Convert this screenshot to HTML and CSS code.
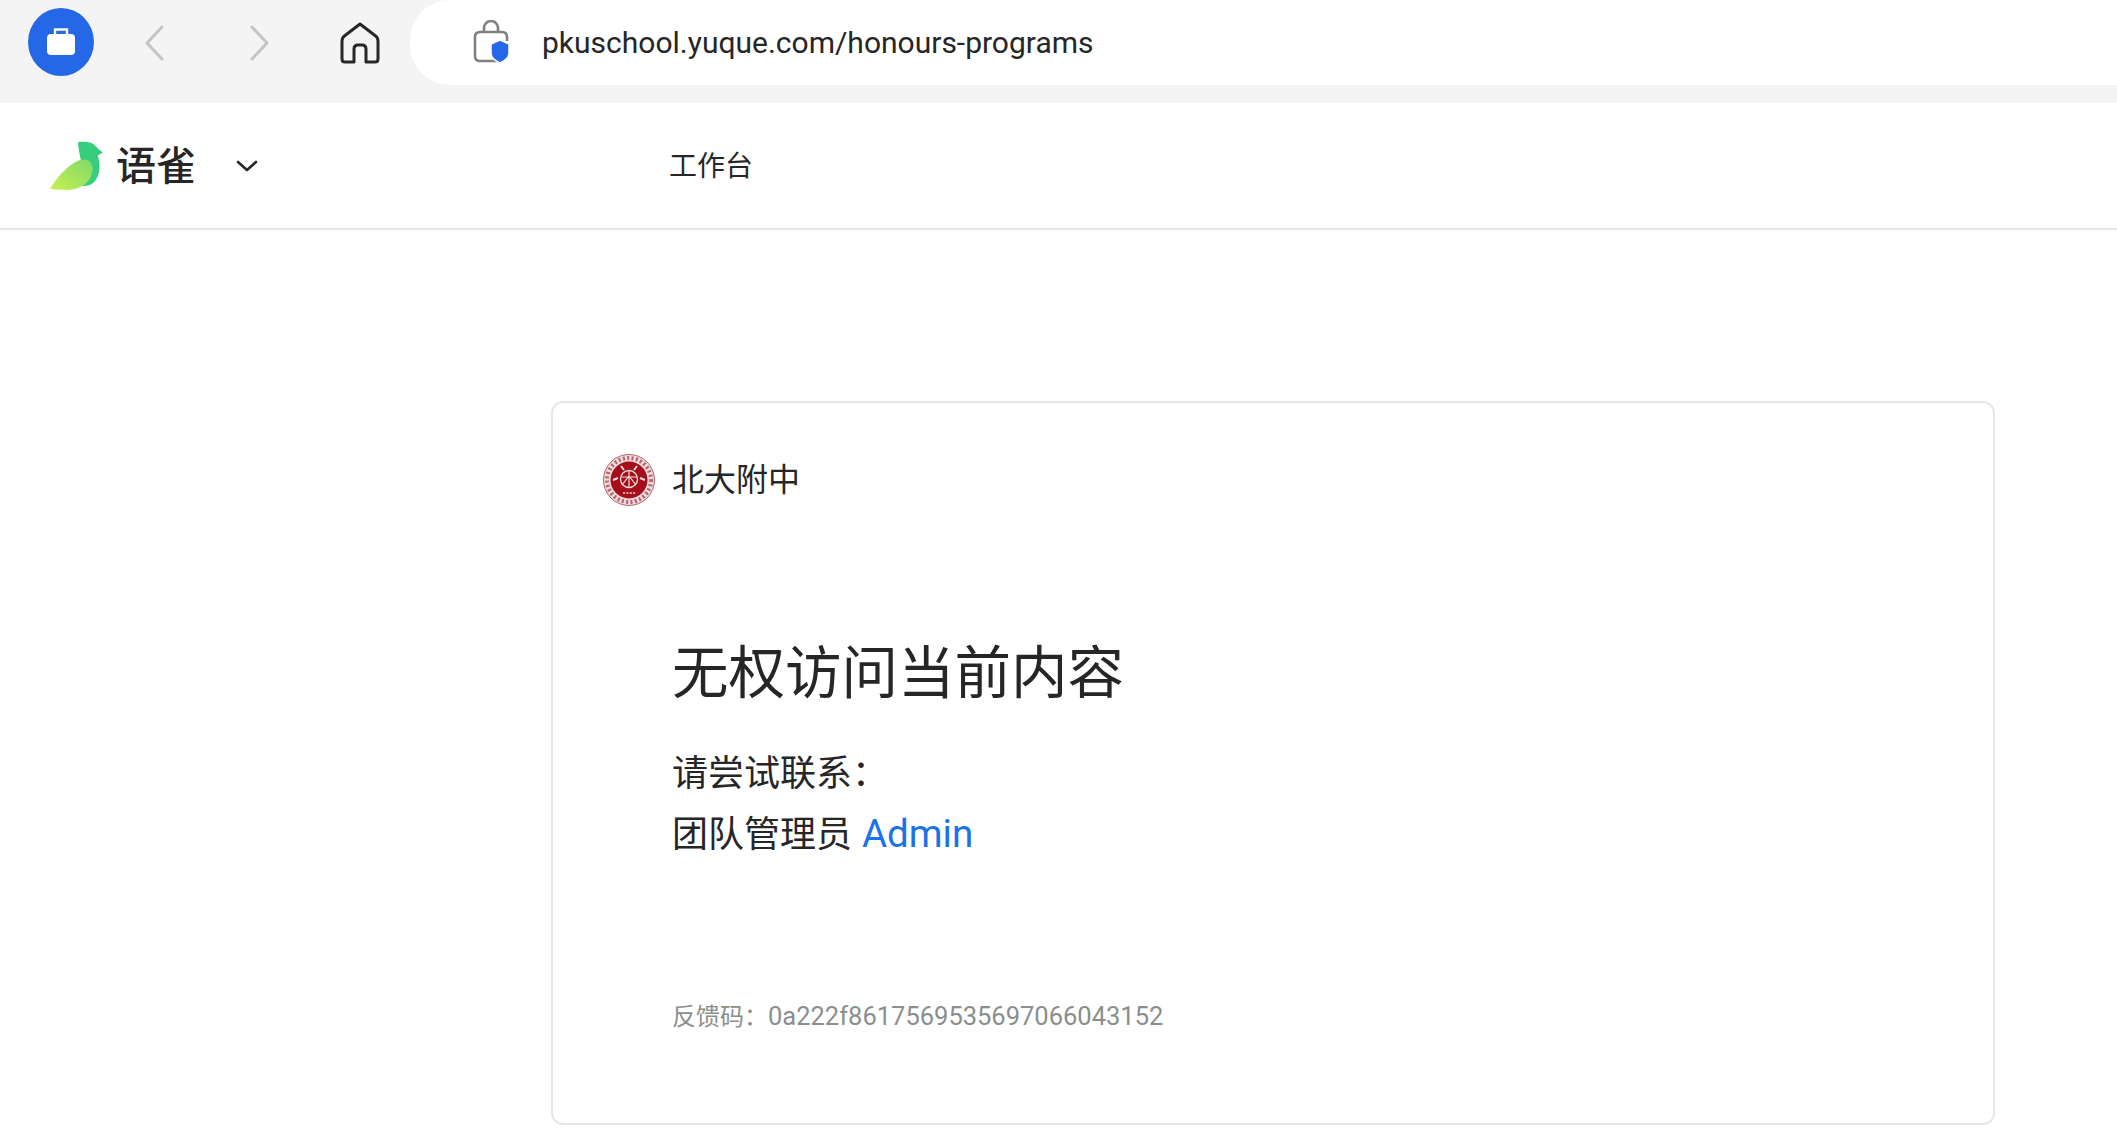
FILE: index.html

```html
<!DOCTYPE html>
<html lang="zh-CN">
<head>
  <meta charset="UTF-8" />
  <title>语雀</title>
  <link rel="stylesheet" href="styles.css">
</head>
<body>
  <div class="browser-bar">
    <div class="work-badge">
      <svg width="30" height="30" viewBox="0 0 30 30">
        <path d="M9 8V2.500h12V8" fill="none" stroke="#fff" stroke-width="2.400"/>
        <rect x="1" y="7" width="28" height="21" rx="4" fill="#fff"/>
      </svg>
    </div>
    <svg class="nav-arrow" width="20" height="36" viewBox="0 0 20 36">
      <path d="M17 2 2 18l15 16" fill="none" stroke="#c4c4c4" stroke-width="3" stroke-linecap="round" stroke-linejoin="round"/>
    </svg>
    <svg class="nav-arrow forward" width="20" height="36" viewBox="0 0 20 36">
      <path d="M3 2l15 16L3 34" fill="none" stroke="#c4c4c4" stroke-width="3" stroke-linecap="round" stroke-linejoin="round"/>
    </svg>
    <svg class="home-icon" width="40" height="42" viewBox="0 0 40 42">
      <path d="M20 2 5 13.500Q2 15.500 2 19v18q0 3 3 3h9V27q0-4 4-4h4q4 0 4 4v13h9q3 0 3-3V19q0-3.500-3-5.500z" fill="none" stroke="#262626" stroke-width="3" stroke-linejoin="round"/>
    </svg>
    <div class="address-bar">
      <svg class="lock-icon" width="38" height="44" viewBox="0 0 38 44">
        <path d="M11 12V8a7 7 0 0 1 14 0v4" fill="none" stroke="#808080" stroke-width="2.600"/>
        <path d="M25 41H7q-5 0-5-5V17q0-5 5-5h22q5 0 5 5v4" fill="none" stroke="#808080" stroke-width="2.600"/>
        <path d="M27 20l9 4v9q0 6-9 10-9-4-9-10v-9z" fill="#2468e8" stroke="#fff" stroke-width="1.500"/>
      </svg>
      <span class="url">pkuschool.yuque.com/honours-programs</span>
    </div>
  </div>

  <header class="topnav">
    <div class="brand">
      <svg width="54" height="50" viewBox="0 0 52 48">
        <defs>
          <linearGradient id="wing" x1="0" y1="1" x2="1" y2="0">
            <stop offset="0" stop-color="#c8f050"/>
            <stop offset="1" stop-color="#7fd96a"/>
          </linearGradient>
        </defs>
        <path d="M27 1c8-1 14 0 17 4 2 2 5 5 7 6l-5 3c3 10 2 19-3 25-3 3-7 5-12 4L30 20c-1-6-3-13-3-19z" fill="#36ce7c"/>
        <path d="M0 46C6 36 16 24 27 19c7-3 14-1 14 8 0 10-9 20-24 20-6 0-12 0-17-1z" fill="url(#wing)"/>
      </svg>
      <span class="brand-name">语雀</span>
      <svg class="chevron" width="22" height="14" viewBox="0 0 22 14">
        <path d="M2 3l9 8 9-8" fill="none" stroke="#262626" stroke-width="2.600" stroke-linecap="round" stroke-linejoin="round"/>
      </svg>
    </div>
    <a class="nav-link">工作台</a>
  </header>

  <main class="content">
    <section class="card">
      <div class="org">
        <svg class="org-logo" width="52" height="52" viewBox="0 0 52 52">
          <circle cx="26" cy="26" r="25.500" fill="#ecdcdd" stroke="#b5626b" stroke-width="1"/>
          <circle cx="26" cy="26" r="22" fill="none" stroke="#b9606a" stroke-width="4" stroke-dasharray="2 2.400"/>
          <circle cx="26" cy="26" r="18.500" fill="#a50f1c"/>
          <circle cx="26" cy="25" r="8.500" fill="none" stroke="#f0dcdc" stroke-width="1.300"/>
          <path d="M26 17v16M19 31l7-9 7 9M18 23h16" fill="none" stroke="#f0dcdc" stroke-width="1.200"/>
          <path d="M10 26l5-2M37 24l5 2M18 12l3 4M34 12l-3 4" stroke="#f0dcdc" stroke-width="2"/>
          <path d="M20 39h12" stroke="#f0dcdc" stroke-width="1.600" stroke-dasharray="2 1.400"/>
        </svg>
        <span class="org-name">北大附中</span>
      </div>
      <div class="message">
        <h1>无权访问当前内容</h1>
        <p class="hint">请尝试联系：</p>
        <p class="contact">团队管理员 <a class="admin">Admin</a></p>
        <div class="feedback">反馈码：<span class="code">0a222f8617569535697066043152</span></div>
      </div>
    </section>
  </main>
</body>
</html>
```

FILE: styles.css

```css
* {
  box-sizing: border-box;
}
html, body {
  height: 100%;
}
body {
  margin: 0;
  background-color: #fff;
  color: #262626;
  font-family: Roboto, "Noto Sans CJK SC", sans-serif;
  overflow: hidden;
}

.browser-bar {
  display: flex;
  align-items: flex-start;
  height: 103px;
  background-color: #f4f4f4;
}
.work-badge {
  display: flex;
  align-items: center;
  justify-content: center;
  width: 66px;
  height: 68px;
  margin: 8px 0 0 28px;
  border-radius: 50%;
  background-color: #2468e8;
}
.nav-arrow {
  margin: 25px 0 0 51px;
}
.nav-arrow.forward {
  margin-left: 84px;
}
.home-icon {
  margin: 22px 0 0 71px;
}
.address-bar {
  display: flex;
  align-items: center;
  flex: 1;
  height: 85px;
  margin-left: 30px;
  padding-left: 63px;
  background-color: #fff;
  border-radius: 40px 0 0 40px;
}
.lock-icon {
  margin-top: -1px;
}
.url {
  margin-left: 31px;
  font-size: 30px;
  color: #262626;
}

.topnav {
  display: flex;
  align-items: center;
  height: 127px;
  border-bottom: 2px solid #e7e7e7;
}
.brand {
  display: flex;
  align-items: center;
  width: 669px;
  padding-left: 50px;
}
.brand-name {
  margin-left: 12px;
  padding-bottom: 5px;
  font-size: 40px;
  font-weight: 500;
}
.chevron {
  margin-left: 40px;
}
.nav-link {
  padding-bottom: 3px;
  font-size: 28px;
  color: #262626;
}

.content {
  padding: 171px 122px 0 551px;
}
.card {
  height: 724px;
  padding: 51px 50px 0;
  border: 2px solid #e7e7e7;
  border-radius: 12px;
}
.org {
  display: flex;
  align-items: center;
  gap: 17px;
}
.org-name {
  padding-bottom: 6px;
  font-size: 32px;
}
.message {
  padding-left: 69px;
}
h1 {
  margin: 128px 0 0;
  font-size: 56.500px;
  font-weight: 400;
  line-height: 80px;
}
.hint, .contact {
  margin: 0;
  font-size: 36px;
  line-height: 60px;
}
.hint {
  margin-top: 30px;
}
.admin {
  margin-left: 1px;
  font-size: 38.500px;
  color: #1a73e8;
}
.feedback {
  margin-top: 132px;
  font-size: 24px;
  color: #8a8f8d;
}
.code {
  font-size: 25.500px;
}
```
